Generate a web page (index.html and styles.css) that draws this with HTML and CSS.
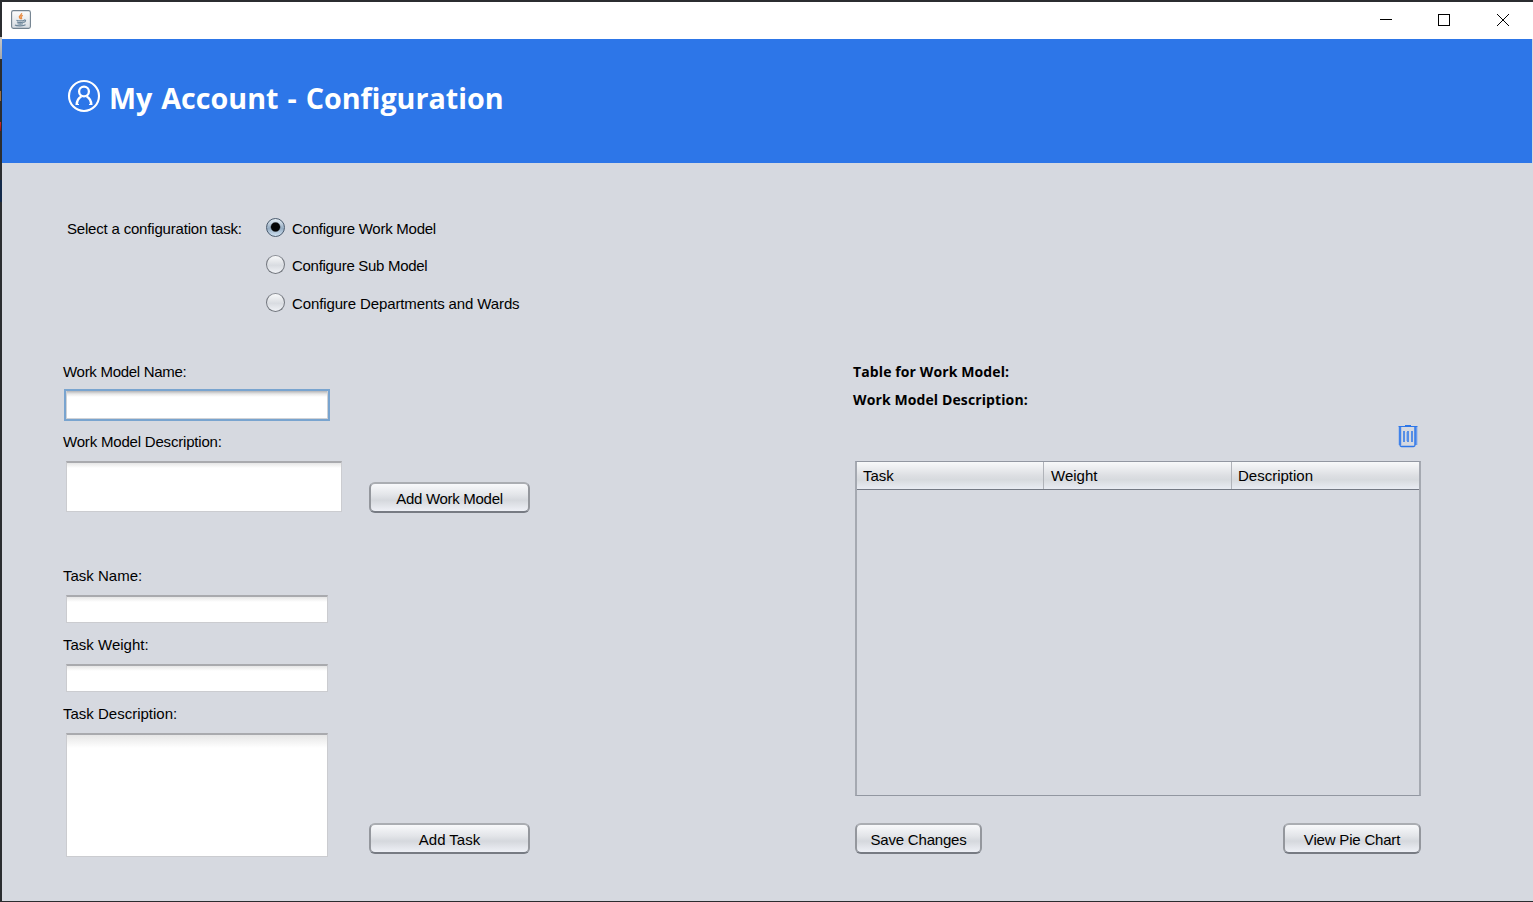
FILE: index.html
```html
<!DOCTYPE html>
<html lang="en">
<head>
<meta charset="utf-8">
<title>My Account - Configuration</title>
<link rel="stylesheet" href="styles.css">
</head>
<body>
<div class="window">
  <div class="titlebar">
    <svg class="java" width="20" height="19" viewBox="0 0 20 19">
      <defs><linearGradient id="jg" x1="0" y1="0" x2="0" y2="1"><stop offset="0" stop-color="#fdfdfd"/><stop offset="1" stop-color="#d5dbe1"/></linearGradient></defs>
      <rect x=".6" y=".6" width="18.8" height="17.8" rx="1.8" fill="url(#jg)" stroke="#71818e" stroke-width="1.1"/>
      <path d="M10.5 3.2c1 1.6-3.3 2.5-2 4.3.4.7 1 1 1 1.8M11.800 5.400c-2.500 1-1.800 1.700-1.300 2.600.2.400 0 .8-.2 1.100" fill="none" stroke="#e78b43" stroke-width="1.4"/>
      <path d="M5.400 10.100c1.200 1 6.300 1 8 .1M6 12c1.600 .7 4.800.7 6.500 0M6.500 13.700c1.500.5 4 .5 5.500 0M4 15c1.500 1.200 9 1.200 10.500-.4M13.200 9.800c2.200-.1 1.600 2.200-.7 2.500" fill="none" stroke="#6c8598" stroke-width="1.2"/>
    </svg>
    <svg class="controls" width="130" height="14" viewBox="0 0 130 14" fill="none" stroke="#000">
      <path d="M2 7.500h12"/>
      <rect x="60.500" y="2.500" width="11" height="11"/>
      <path d="M119 2l12 12M131 2l-12 12"/>
    </svg>
  </div>
  <header class="banner">
    <svg class="user" width="34" height="34" viewBox="0 0 34 34" fill="none" stroke="#fff">
      <circle cx="17" cy="17" r="15" stroke-width="2.100"/>
      <circle cx="17" cy="12.500" r="4.900" stroke-width="2.300"/>
      <path d="M9.700 26c0-4 1.500-6.800 4.600-8.500M24.300 26c0-4-1.500-6.800-4.600-8.500" stroke-width="2.500"/>
      <path d="M9 25.500h3M22 25.500h3" stroke-width="1.200"/>
    </svg>
    <h1 class="title">My Account - Configuration</h1>
  </header>
  <section class="tasks">
    <span class="prompt tight">Select a configuration task:</span>
    <div class="options">
      <label class="option tighter"><span class="radio on"></span>Configure Work Model</label>
      <label class="option tightest"><span class="radio"></span>Configure Sub Model</label>
      <label class="option snug"><span class="radio"></span>Configure Departments and Wards</label>
    </div>
  </section>
  <main class="main">
    <div class="forms">
      <div class="group">
        <div class="fields">
          <div class="label tightest">Work Model Name:</div>
          <div class="field focus"></div>
          <div class="label tight">Work Model Description:</div>
          <div class="field medium"></div>
        </div>
        <button class="btn add tightest">Add Work Model</button>
      </div>
      <div class="group second">
        <div class="fields">
          <div class="label">Task Name:</div>
          <div class="field"></div>
          <div class="label">Task Weight:</div>
          <div class="field"></div>
          <div class="label">Task Description:</div>
          <div class="field large"></div>
        </div>
        <button class="btn add">Add Task</button>
      </div>
    </div>
    <div class="results">
      <div class="strong">Table for Work Model:</div>
      <div class="strong">Work Model Description:</div>
      <svg class="trash" width="20" height="24" viewBox="0 0 20 24" fill="none" stroke="#2d76e8">
        <path d="M.5 2.500h19M7 1.500h6" stroke-width="1.200"/>
        <path d="M2 3v18M18 3v18" stroke-width="2.600" stroke="#6a9cec"/>
        <path d="M2 3v18q0 1.500 1.500 1.500h12q1.500 0 1.500-1.500V3" stroke-width="1.300"/>
        <path d="M6 7v11M10 7v11M14 7v11" stroke-width="1.500"/>
        <path d="M8.500 8v9" stroke-width="1" stroke="#9dbced"/>
      </svg>
      <div class="table">
        <div class="head"><div class="cell">Task</div><div class="cell">Weight</div><div class="cell">Description</div></div>
      </div>
      <div class="actions">
        <button class="btn save tight">Save Changes</button>
        <button class="btn view tight">View Pie Chart</button>
      </div>
    </div>
  </main>
</div>
</body>
</html>
```
FILE: styles.css
```css
* { box-sizing: border-box; }
body {
  margin: 0;
  height: 902px;
  padding: 2px 0 1px 2px;
  background:
    linear-gradient(#c9cacb, #a5a7a9) 0 37px / 2px 22px no-repeat,
    linear-gradient(#9a7044, #9a7044) 0 91px / 1px 10px no-repeat,
    linear-gradient(#d32a2a, #8a1518) 0 122px / 1px 9px no-repeat,
    linear-gradient(#12294b, #12294b) 0 180px / 2px 22px no-repeat,
    #2b2d30;
  font: 15px/20px "Liberation Sans", Arial, sans-serif;
  color: #000;
  overflow: hidden;
}
.window { height: 899px; background: #d6d9e0; }
.tightest { letter-spacing: -.29px; }
.tighter { letter-spacing: -.25px; }
.tight { letter-spacing: -.19px; }
.snug { letter-spacing: -.12px; }
.titlebar {
  height: 37px;
  padding: 8px 25px 0 9px;
  display: flex;
  justify-content: space-between;
  background: #fff;
}
.controls { margin-top: 2px; overflow: visible; }
.banner {
  height: 124px;
  margin-right: 1px;
  padding: 40px 0 0 65px;
  display: flex;
  gap: 8px;
  background: #2d76e8;
}
.title {
  margin: -1px 0 0;
  font: bold 28.7px/40px "Open Sans", "Noto Sans", sans-serif;
  word-spacing: 1.5px;
  color: #fff;
  white-space: nowrap;
}
.tasks { height: 192px; padding: 46px 0 0 65px; display: flex; }
.prompt { width: 199px; padding-top: 10px; white-space: nowrap; }
.options { display: grid; grid-template-rows: 37px 37px 38px; }
.option { display: flex; align-items: center; gap: 7px; white-space: nowrap; padding-top: 3px; }
.radio {
  width: 19px;
  height: 19px;
  margin-top: -3px;
  border: 1.5px solid #73777e;
  border-top-color: #8b8f96;
  border-radius: 50%;
  background: linear-gradient(#f8f9fa, #d9dce1 55%, #f0f2f6);
}
.radio.on {
  border-color: #4a5b6e;
  background: radial-gradient(circle at 50% 47%, #060606 0 4px, transparent 5.3px), linear-gradient(#e6eef5, #95acc2 55%, #d0e2f2);
}
.main { display: flex; padding: 7px 110px 0 61px; }
.forms { width: 790px; }
.group { display: flex; align-items: flex-end; }
.second { margin-top: 54px; }
.fields { width: 306px; }
.label { white-space: nowrap; }
.field {
  width: 262px;
  height: 28px;
  margin: 9px 0 12px 3px;
  border: 1px solid #cbccd0;
  border-top: 2px solid #a9aaae;
  background: linear-gradient(#e6e6e6, #fff 5px);
}
.field.focus {
  width: 266px;
  height: 32px;
  margin: 7px 0 11px 1px;
  border: 2px solid #79a4cf;
  background: linear-gradient(#b4b5b8, #e8e8e8 3px, #fff 6px);
  box-shadow: inset 1px -1px #d0d2d6, inset -1px 0 #d0d2d6;
}
.field.medium { width: 276px; height: 51px; margin-bottom: 0; }
.field.large { height: 124px; margin-bottom: 0; background: linear-gradient(#e6e6e6, #fff 13px); }
.btn {
  height: 31px;
  padding: 2px 0 0;
  border: 2px solid #94979d;
  border-color: #aaadb2 #94979d #777b83;
  border-radius: 6px;
  background: linear-gradient(#f8f9fb, #e3e5e9 40%, #d5d8dd 60%, #eef0f6);
  font: inherit;
  color: #000;
  white-space: nowrap;
}
.btn.tightest { letter-spacing: -.29px; }
.btn.tight { letter-spacing: -.19px; }
.add { width: 161px; margin-bottom: -1px; }
.second .add { margin-bottom: 3px; }
.results { width: 568px; flex-shrink: 0; display: flex; flex-direction: column; }
.strong {
  height: 28px;
  font: bold 14px/20px "Open Sans", "Noto Sans", sans-serif;
  letter-spacing: .11px;
  white-space: nowrap;
}
.trash { align-self: flex-end; margin: 6px 3px 0 0; }
.table {
  width: 566px;
  height: 335px;
  margin: 13px 0 0 2px;
  border: 1px solid #9297a1;
  border-width: 1px 2px;
  border-left-color: #a5a9b1;
  border-right-color: #a5a9b1;
}
.head {
  height: 28px;
  display: grid;
  grid-template-columns: 187px 188px 187px;
  border-bottom: 1px solid #747984;
  background: linear-gradient(#f8f9fa, #dddfe3 50%, #d7dade 65%, #e9ecf3);
}
.cell { padding: 4px 0 0 6px; border-right: 1px solid #b0b3b9; }
.cell:nth-child(2) { padding-left: 7px; }
.cell:last-child { border-right: 0; }
.actions { display: flex; justify-content: space-between; margin: 27px 0 0 2px; }
.save { width: 127px; }
.view { width: 138px; }
```
